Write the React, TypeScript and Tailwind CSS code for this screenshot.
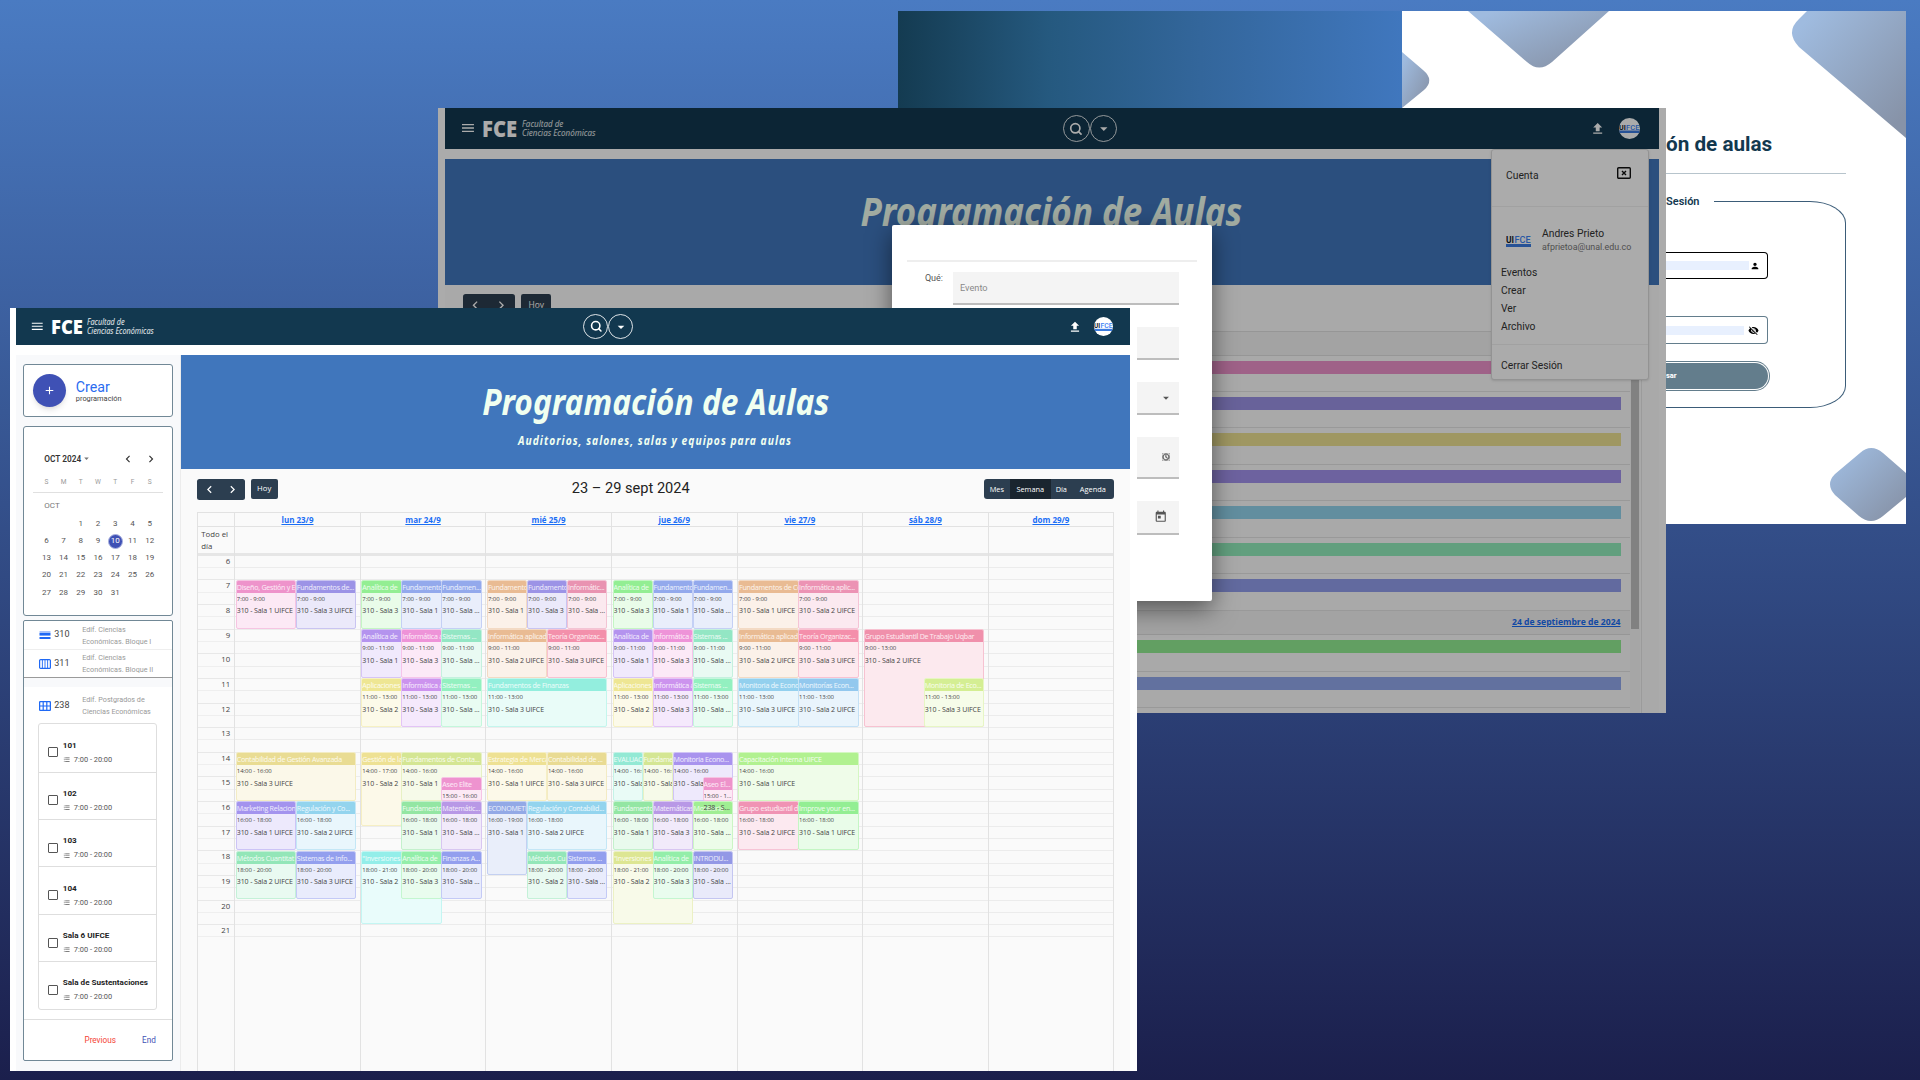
import React from "react";
import {
  MdAdd,
  MdArrowDropDown,
  MdChevronLeft,
  MdChevronRight,
  MdFileUpload,
  MdFormatListBulleted,
  MdMenu,
  MdPerson,
  MdSchedule,
  MdToday,
  MdVisibilityOff,
} from "react-icons/md";
import { Search } from "lucide-react";

const HOUR = 24.63;

/* ---------- shared header pieces (sized in em so both windows can scale them) ---------- */

function UifceMark({ className }: { className: string }) {
  return (
    <svg viewBox="0 0 50 24" className={className}>
      <text x="0" y="16" fontFamily="Roboto" fontWeight="700" fontSize="19" textLength="16" lengthAdjust="spacingAndGlyphs" fill="#111827">UI</text>
      <text x="17" y="16" fontFamily="Roboto" fontWeight="500" fontSize="19" textLength="32" lengthAdjust="spacingAndGlyphs" fill="#3b82f6">FCE</text>
      <rect x="0" y="18" width="50" height="6" fill="#3b7be0" />
    </svg>
  );
}

function NavBar() {
  return (
    <div className="flex h-[3.72em] shrink-0 items-center bg-[#12384f] text-white">
      <div className="flex flex-1 items-center pl-[1.4em]">
        <MdMenu className="mr-[0.6em] size-[1.45em]" />
        <div className="w-[3.6em]">
          <div className="origin-left scale-x-[0.92] font-['Open_Sans'] text-[2em] leading-none font-extrabold">FCE</div>
        </div>
        <div className="font-['Noto_Sans'] text-[0.82em] leading-[1.02] text-white/90 italic">
          <div className="origin-left scale-x-[0.89] whitespace-nowrap">Facultad de<br />Ciencias Económicas</div>
        </div>
      </div>
      <div className="ml-[7.3em] flex items-center">
        <div className="flex size-[2.48em] items-center justify-center rounded-full border border-white/85">
          <Search className="size-[1.25em]" strokeWidth={3} />
        </div>
        <div className="flex size-[2.48em] items-center justify-center rounded-full border border-white/85">
          <MdArrowDropDown className="size-[1.6em]" />
        </div>
      </div>
      <div className="flex flex-1 items-center justify-end pr-[1.7em]">
        <MdFileUpload className="mr-[1.2em] size-[1.4em]" />
        <div className="flex size-[1.9em] items-center justify-center overflow-hidden rounded-full bg-white">
          <UifceMark className="w-[1.9em] shrink-0" />
        </div>
      </div>
    </div>
  );
}

function Banner() {
  return (
    <div className="flex h-[11.4em] shrink-0 flex-col items-center bg-[#4076bc] pt-[2.25em] font-['Noto_Sans'] whitespace-nowrap text-[#f0fff0] italic">
      <div className="h-[5.4em] scale-x-[0.882]">
        <span className="text-[3.6em] leading-[1.4] font-bold">Programación de Aulas</span>
      </div>
      <div className="scale-x-[0.82] text-[1.25em] leading-[1.6] font-bold tracking-[0.1em]">
        Auditorios, salones, salas y equipos para aulas
      </div>
    </div>
  );
}

function NavButtons() {
  return (
    <div className="flex items-center gap-[0.6em] text-white">
      <div className="flex h-[2.1em] w-[4.75em] items-center justify-around rounded-[0.25em] bg-[#2c3e50]">
        <MdChevronLeft className="size-[1.5em]" />
        <MdChevronRight className="size-[1.5em]" />
      </div>
      <div className="flex h-[2em] w-[2.7em] items-center justify-center rounded-[0.2em] bg-[#2c3e50]">
        <span className="font-['Open_Sans'] text-[0.77em]">Hoy</span>
      </div>
    </div>
  );
}

/* ---------- login window ---------- */

function LoginWindow() {
  return (
    <div className="absolute top-[11px] left-[898px] flex h-[513px] w-[1008px] overflow-hidden bg-white">
      <div className="w-[504px] bg-[linear-gradient(90deg,#143b51_0%,#25597f_30%,#33669b_60%,#4077be_100%)]" />
      <div className="relative w-[504px] font-[Roboto]">
        <svg viewBox="0 0 504 513" className="absolute inset-0 size-full">
          <defs>
            <linearGradient id="tile" x1="0" y1="0" x2="1" y2="1">
              <stop offset="0.1" stopColor="#9fbbdf" />
              <stop offset="0.9" stopColor="#8793a8" />
            </linearGradient>
          </defs>
          <g fill="url(#tile)">
            <path d="M66 0 L125 51 Q137 62 150 51 L207 0 Z" />
            <path d="M405 0 L397 8 Q383 21 397 36 L504 127 V0 Z" />
            <path d="M0 41 L21 59 Q33 69 22 79 L0 97 Z" />
            <path d="M458 442 Q469 432 481 442 L504 462 V486 L481 505 Q469 515 457 505 L433 484 Q423 473 433 463 Z" />
          </g>
        </svg>
        <div className="relative ml-[264px] w-[180px]">
          <div className="h-[163px] border-b border-[#b7c4cc] pt-[119px] text-[20.7px] leading-[28px] font-bold whitespace-nowrap text-[#12384f]">
            <span>ón de aulas</span>
          </div>
          <div className="mt-[21px] flex h-[14px] items-center text-[11px] font-semibold text-[#12384f]">Sesión</div>
          <div className="-mt-[8px] flex">
            <div className="h-[207px] w-[48px] border-b-[1.5px] border-[#3b5c78]" />
            <div className="h-[207px] w-[132px] rounded-tr-[36px_22px] rounded-br-[36px_22px] border-[1.5px] border-l-0 border-[#3b5c78]" />
          </div>
          <div className="absolute top-[241px] left-0 w-[105px]">
            <div className="flex h-[27px] w-[102px] items-center justify-between rounded-r-[4px] border-[1.5px] border-l-0 border-black pr-[7px]">
              <div className="h-[9px] w-[83px] bg-[#e8f0fe]" />
              <MdPerson className="size-[10px]" />
            </div>
            <div className="mt-[37px] flex h-[28px] w-[102px] items-center justify-between rounded-r-[4px] border border-l-0 border-[#637d8c] pr-[8px]">
              <div className="h-[9px] w-[78px] bg-[#e8f0fe]" />
              <MdVisibilityOff className="size-[11px]" />
            </div>
            <div className="mt-[17px] h-[30px] w-[104px] rounded-r-full border border-l-0 border-[#637d8c] py-px pr-px">
              <div className="flex h-full items-center rounded-r-full bg-[#637d8c] text-[7.5px] font-extrabold text-white">sar</div>
            </div>
          </div>
        </div>
      </div>
    </div>
  );
}

/* ---------- agenda window with account menu and event dialog ---------- */

const agendaBars = ["bg-[#ee93cb]", "bg-[#9c93e6]", "bg-[#eee193]", "bg-[#a393ee]", "bg-[#93d4ee]", "bg-[#93eebd]", "bg-[#939fee]"];
const agendaBarsNext = ["bg-[#93ee93]", "bg-[#93a9ee]", "bg-[#939fee]"];

function AgendaRow({ bar }: { bar: string }) {
  return (
    <div className="h-[36.45px] border-b border-[#e4e4e4] pt-[5px] pr-[9px]">
      <div className={`h-[13px] ${bar}`} />
    </div>
  );
}

function AccountMenu() {
  return (
    <div className="absolute top-[41px] left-[1053.5px] h-[231px] w-[157.5px] rounded-[3px] border border-[#dcdcdc] bg-white font-[Roboto] text-[10.3px] whitespace-nowrap text-[#333] shadow">
      <div className="flex h-[57px] items-start justify-between border-b border-[#f0f0f0] pt-[17px] pr-[17px] pl-[14px]">
        <span className="pt-[0.5px] leading-[16px]">Cuenta</span>
        <svg viewBox="0 0 14 12" className="h-[12px] w-[14px]">
          <rect x="0.7" y="0.7" width="12.6" height="10.6" rx="1" fill="none" stroke="#111" strokeWidth="1.4" />
          <path d="M5 4 L9 8 M9 4 L5 8" stroke="#111" strokeWidth="1.4" />
        </svg>
      </div>
      <div className="flex pt-[21px] pl-[14px]">
        <UifceMark className="mt-[7px] mr-[11px] h-[12px] w-[25px]" />
        <div className="leading-[12.5px]">
          <div>Andres Prieto</div>
          <div className="text-[8.9px] text-[#777]">afprietoa@unal.edu.co</div>
        </div>
      </div>
      <div className="h-[92px] border-b border-[#f0f0f0] pt-[11px] pl-[9px] leading-[18px]">
        <div>Eventos</div>
        <div>Crear</div>
        <div>Ver</div>
        <div>Archivo</div>
      </div>
      <div className="pt-[12px] pl-[9px] leading-[18px]">Cerrar Sesión</div>
    </div>
  );
}

function EventDialog() {
  const field = "flex items-center justify-end border-b-2 border-[#bdbdbd] bg-[#f4f4f4] text-[#555]";
  return (
    <div className="absolute top-[117px] left-[454.5px] h-[376px] w-[320px] rounded-[2px] bg-white px-[15px] font-[Roboto] shadow-[0_8px_24px_rgba(0,0,0,0.5)]">
      <div className="h-[37px] border-b-2 border-[#eee]" />
      <div className="mt-[10px] flex">
        <div className="w-[46px] pr-[10px] text-right text-[9px] leading-[12px] text-[#555]">Qué:</div>
        <div className="w-[225.5px]">
          <div className="flex h-[33px] items-center border-b-2 border-[#bdbdbd] bg-[#f4f4f4] pl-[7px] text-[9.2px] text-[#8a8a8a]">
            <span className="pt-px">Evento</span>
          </div>
          <div className={`mt-[22px] h-[33px] ${field}`} />
          <div className={`mt-[22px] h-[33px] pr-[6px] ${field}`}>
            <MdArrowDropDown className="size-[14px]" />
          </div>
          <div className={`mt-[22px] h-[42px] pr-[9px] ${field}`}>
            <MdSchedule className="size-[8px]" strokeWidth={1.5} stroke="currentColor" />
          </div>
          <div className={`mt-[22px] h-[34px] pr-[11px] ${field}`}>
            <MdToday className="size-[13.5px]" />
          </div>
        </div>
      </div>
    </div>
  );
}

function AgendaWindow() {
  return (
    <div className="absolute top-[108px] left-[437.5px] h-[604.5px] w-[1228.5px] overflow-hidden bg-white text-[11px]">
      <div className="ml-[7px] w-[1214px]">
        <NavBar />
        <div className="h-[10.5px]" />
        <Banner />
        <div className="flex bg-[#fcfcfc]">
          <div className="w-[1197px] border-r border-[#e8e8e8]">
            <div className="h-[45.8px] pt-[9px] pl-[18px]">
              <NavButtons />
            </div>
            <div className="flex">
              <div className="w-[1185px]">
                <div className="h-[25px] border-y border-[#e0e0e0] bg-[#f3f3f3]" />
                {agendaBars.map((bar, i) => (
                  <AgendaRow key={i} bar={bar} />
                ))}
                <div className="flex h-[24.5px] items-center justify-end border-b border-[#e0e0e0] bg-[#f3f3f3] pr-[9px]">
                  <span className="font-['Open_Sans'] text-[8.6px] font-bold text-[#1a6ef5] underline">24 de septiembre de 2024</span>
                </div>
                {agendaBarsNext.map((bar, i) => (
                  <AgendaRow key={i} bar={bar} />
                ))}
              </div>
              <div className="w-[10px] bg-[#f8f8f8] pl-px">
                <div className="h-[298px] w-[8.5px] bg-[#c1c1c1]" />
              </div>
            </div>
          </div>
        </div>
      </div>
      <AccountMenu />
      <div className="absolute inset-0 bg-black/[0.33]" />
      <EventDialog />
    </div>
  );
}

/* ---------- weekly schedule ---------- */

type Ev = {
  tint: string;
  title: string;
  from: number;
  to: number;
  left: number;
  width: number;
  time: string;
  room: string;
  spill?: boolean;
};

const third = 33.333;

const ev = (tint: string, title: string, from: number, to: number, left: number, width: number, room: string, time?: string, spill?: boolean): Ev => ({
  tint,
  title,
  from,
  to,
  left,
  width,
  room,
  time: time ?? `${from}:00 - ${to}:00`,
  spill,
});

const S = (n: number) => `310 - Sala ${n}`;
const U = (n: number) => `310 - Sala ${n} UIFCE`;

const mornings: Ev[] = [
  ev("[--c:#93ee93]", "Analítica de", 7, 9, 0, third, S(3)),
  ev("[--c:#93a9ec]", "Fundamento", 7, 9, third, third, S(1)),
  ev("[--c:#93a9ec]", "Fundamen...", 7, 9, 2 * third, third, "310 - Sala ..."),
  ev("[--c:#b493ee]", "Analítica de", 9, 11, 0, third, S(1)),
  ev("[--c:#ee93d8]", "Informática a", 9, 11, third, third, S(3)),
  ev("[--c:#93e6c4]", "Sistemas ...", 9, 11, 2 * third, third, "310 - Sala ..."),
  ev("[--c:#eee693]", "Aplicaciones", 11, 13, 0, third, S(2)),
  ev("[--c:#cc93ee]", "Informática a", 11, 13, third, third, S(3)),
  ev("[--c:#93f0c0]", "Sistemas ...", 11, 13, 2 * third, third, "310 - Sala ..."),
];

const days: { label: string; events: Ev[] }[] = [
  {
    label: "lun 23/9",
    events: [
      ev("[--c:#ee93cb]", "Diseño, Gestión y E", 7, 9, 0, 50, U(1)),
      ev("[--c:#9c93e6]", "Fundamentos de...", 7, 9, 50, 50, U(3)),
      ev("[--c:#e9dc93]", "Contabilidad de Gestión Avanzada", 14, 16, 0, 100, U(3)),
      ev("[--c:#a393ee]", "Marketing Relacion", 16, 18, 0, 50, U(1)),
      ev("[--c:#93d4ee]", "Regulación y Co...", 16, 18, 50, 50, U(2)),
      ev("[--c:#93e6b8]", "Métodos Cuantitat", 18, 20, 0, 50, U(2)),
      ev("[--c:#939fee]", "Sistemas de Info...", 18, 20, 50, 50, U(3)),
    ],
  },
  {
    label: "mar 24/9",
    events: [
      ...mornings,
      ev("[--c:#eee193]", "Gestión de la", 14, 17, 0, third, S(2)),
      ev("[--c:#d4e693]", "Fundamentos de Conta...", 14, 16, third, 2 * third, S(1)),
      ev("[--c:#ee93cf]", "Aseo Elite", 15, 16, 2 * third, third, ""),
      ev("[--c:#93e6a3]", "Fundamento", 16, 18, third, third, S(1)),
      ev("[--c:#b898e6]", "Matemátic...", 16, 18, 2 * third, third, "310 - Sala ..."),
      ev("[--c:#93eee9]", "\"Inversiones", 18, 21, 0, 2 * third, S(2)),
      ev("[--c:#93eea9]", "Analítica de", 18, 20, third, third, S(3)),
      ev("[--c:#939fee]", "Finanzas A...", 18, 20, 2 * third, third, "310 - Sala ..."),
    ],
  },
  {
    label: "mié 25/9",
    events: [
      ev("[--c:#e9bb93]", "Fundamento", 7, 9, 0, third, S(1)),
      ev("[--c:#9c93e6]", "Fundamento", 7, 9, third, third, S(3)),
      ev("[--c:#e993b1]", "Informátic...", 7, 9, 2 * third, third, "310 - Sala ..."),
      ev("[--c:#e9bb93]", "Informática aplicad", 9, 11, 0, 50, U(2)),
      ev("[--c:#f390ab]", "Teoría Organizac...", 9, 11, 50, 50, U(3)),
      ev("[--c:#93eede]", "Fundamentos de Finanzas", 11, 13, 0, 100, U(3)),
      ev("[--c:#eee193]", "Estrategia de Merca", 14, 16, 0, 50, U(1)),
      ev("[--c:#e9db93]", "Contabilidad de ...", 14, 16, 50, 50, U(3)),
      ev("[--c:#93a9e6]", "ECONOMETR", 16, 19, 0, third, S(1)),
      ev("[--c:#93d4ee]", "Regulación y Contabilid...", 16, 18, third, 2 * third, U(2)),
      ev("[--c:#93e6b8]", "Métodos Cu", 18, 20, third, third, S(2)),
      ev("[--c:#939fee]", "Sistemas ...", 18, 20, 2 * third, third, "310 - Sala ..."),
    ],
  },
  {
    label: "jue 26/9",
    events: [
      ...mornings,
      ev("[--c:#93e9d4]", "EVALUAC", 14, 16, 0, 25, "310 - Sala"),
      ev("[--c:#d4e693]", "Fundame", 14, 16, 25, 25, "310 - Sala"),
      ev("[--c:#a993ee]", "Monitoria Econo...", 14, 16, 50, 50, "310 - Sala"),
      ev("[--c:#93e6a3]", "Fundamento", 16, 18, 0, third, S(1)),
      ev("[--c:#b898e6]", "Matemáticas", 16, 18, third, third, S(3)),
      ev("[--c:#a0ee93]", "Monitoria", 16, 18, 2 * third, third, "310 - Sala ..."),
      ev("[--c:#ee93cb]", "Aseo El...", 15, 16, 75, 25, "238 - S...", "15:00 - 1...", true),
      ev("[--c:#dde693]", "\"Inversiones", 18, 21, 0, 2 * third, S(2)),
      ev("[--c:#93eea9]", "Analítica de", 18, 20, third, third, S(3)),
      ev("[--c:#9398e6]", "INTRODU...", 18, 20, 2 * third, third, "310 - Sala ..."),
    ],
  },
  {
    label: "vie 27/9",
    events: [
      ev("[--c:#e9bb93]", "Fundamentos de Co", 7, 9, 0, 50, U(1)),
      ev("[--c:#ec93b4]", "Informática aplic...", 7, 9, 50, 50, U(2)),
      ev("[--c:#e9bb93]", "Informática aplicad", 9, 11, 0, 50, U(2)),
      ev("[--c:#f48fab]", "Teoría Organizac...", 9, 11, 50, 50, U(3)),
      ev("[--c:#93d0ee]", "Monitoria de Econo", 11, 13, 0, 50, U(3)),
      ev("[--c:#93c8ee]", "Monitorías Econ...", 11, 13, 50, 50, U(2)),
      ev("[--c:#b1f190]", "Capacitación Interna UIFCE", 14, 16, 0, 100, U(1)),
      ev("[--c:#f093b4]", "Grupo estudiantil d", 16, 18, 0, 50, U(2)),
      ev("[--c:#93ee93]", "Improve your en...", 16, 18, 50, 50, U(1)),
    ],
  },
  {
    label: "sáb 28/9",
    events: [
      ev("[--c:#f090ab]", "Grupo Estudiantil De Trabajo Uqbar", 9, 13, 0, 100, U(2)),
      ev("[--c:#d4ee93]", "Monitoria de Eco...", 11, 13, 50, 50, U(3)),
    ],
  },
  { label: "dom 29/9", events: [] },
];

function EventCard({ e }: { e: Ev }) {
  return (
    <div
      className={`absolute rounded-[2px] border border-[color-mix(in_srgb,var(--c)_55%,white)] bg-[color-mix(in_srgb,var(--c)_20%,white)] ${e.spill ? "" : "overflow-hidden"} ${e.tint}`}
      style={{ left: `${e.left}%`, width: `calc(${e.width}% + 0.5px)`, top: (e.from - 6) * HOUR, height: (e.to - e.from) * HOUR - 0.5 }}
    >
      <div className="h-[12px] overflow-hidden bg-(--c) text-[7.1px] leading-[13px] tracking-[-0.035em] text-white/85">{e.title}</div>
      <div className="h-[11.5px] overflow-hidden text-[6px] leading-[12px] tracking-[-0.01em] text-[#444]">{e.time}</div>
      <div className="text-[7px] leading-[13px] tracking-[-0.015em] text-[#444]">{e.room}</div>
    </div>
  );
}

function WeekGrid() {
  return (
    <div className="flex w-[917px] border-t border-r border-[#e2e2e2] font-['Open_Sans'] whitespace-nowrap">
      <div className="w-[37px] border-l border-[#e2e2e2] text-[7.8px] text-[#444]">
        <div className="h-[14px] border-b border-[#e2e2e2]" />
        <div className="h-[25.5px] pt-[1.5px] pl-[3px] leading-[11.8px]">Todo el<br />día</div>
        <div className="h-[3px] bg-[#e6e6e6]" />
        {Array.from({ length: 16 }, (_, i) => (
          <div key={i} className={i === 15 ? "h-[12.3px] border-b border-[#e8e8e8]" : "h-[24.63px] border-b border-[#e8e8e8]"}>
            <div className="h-[12.3px] border-b border-[#efefef] pr-[4px] text-right leading-[11px]">{i + 6}</div>
          </div>
        ))}
      </div>
      {days.map((d) => (
        <div key={d.label} className="w-[125.6px] border-l border-[#e2e2e2]">
          <div className="flex h-[14px] items-center justify-center border-b border-[#e2e2e2]">
            <span className="text-[8px] font-bold text-[#1a6ef5] underline">{d.label}</span>
          </div>
          <div className="h-[25.5px]" />
          <div className="h-[3px] bg-[#e6e6e6]" />
          <div className="relative">
            {Array.from({ length: 31 }, (_, i) => (
              <div key={i} className="h-[12.315px] border-b border-[#ececec]" />
            ))}
            <div className="absolute top-[-0.6px] bottom-0 left-[0.6px] w-[120px]">
              {d.events.map((e, i) => (
                <EventCard key={i} e={e} />
              ))}
            </div>
          </div>
        </div>
      ))}
    </div>
  );
}

function MonthCard() {
  const cells: (number | null)[] = [null, null, ...Array.from({ length: 31 }, (_, i) => i + 1)];
  return (
    <div className="h-[190px] rounded-[3px] border-[1.3px] border-[#718896] bg-white px-[9px] pt-[23px] text-[8px] text-[#555]">
      <div className="flex h-[17px] items-center pl-[11px] text-[#333]">
        <span className="text-[8.3px] font-semibold">OCT 2024</span>
        <MdArrowDropDown className="size-[11px] text-[#777]" />
        <MdChevronLeft className="ml-[28.5px] size-[14px]" />
        <MdChevronRight className="ml-[9.5px] size-[14px]" />
      </div>
      <div className="mt-[6px] grid h-[20px] grid-cols-7 items-center border-b border-[#e0e0e0] px-[4.5px] text-center text-[6.6px] text-[#999]">
        {["S", "M", "T", "W", "T", "F", "S"].map((c, i) => (
          <span key={i}>{c}</span>
        ))}
      </div>
      <div className="flex h-[22px] items-center pt-[4px] pl-[11px] text-[8px] text-[#777]">OCT</div>
      <div className="grid grid-cols-7 px-[4.5px] text-center">
        {cells.map((c, i) => (
          <div key={i} className="flex h-[17.2px] items-center justify-center">
            {c === 10 ? (
              <span className="flex size-[15px] items-center justify-center rounded-full border border-[#aab2e0] bg-[#3f51b5] text-white">10</span>
            ) : (
              c
            )}
          </div>
        ))}
      </div>
    </div>
  );
}

const rowsIcon = (
  <svg viewBox="0 0 12 10" className="h-[10px] w-[12px]">
    <rect x="0.5" y="1" width="11" height="1" fill="#a9c4fb" />
    <rect x="0.5" y="2.6" width="11" height="3" fill="#1f69f5" />
    <rect x="0.5" y="7" width="11" height="2" fill="#1f69f5" />
  </svg>
);

const columnsIcon = (
  <svg viewBox="0 0 12 10" className="h-[10px] w-[12px]" fill="none" stroke="#1f69f5">
    <rect x="0.6" y="0.6" width="10.8" height="8.8" rx="1" strokeWidth="1.2" />
    <path d="M3.4 1 V9 M6 1 V9 M8.6 1 V9" strokeWidth="0.9" />
  </svg>
);

const gridIcon = (
  <svg viewBox="0 0 12 10" className="h-[10px] w-[12px]" fill="none" stroke="#1f69f5">
    <rect x="0.6" y="0.6" width="10.8" height="8.8" rx="1" strokeWidth="1.3" />
    <path d="M4.2 1 V9 M7.8 1 V9 M1 5 H11" strokeWidth="1.2" />
  </svg>
);

function Building({ icon, code, children }: { icon: React.ReactNode; code: string; children: React.ReactNode }) {
  return (
    <div className="flex h-[27.5px] items-center pl-[15px]">
      {icon}
      <span className="ml-[3px] w-[28px] text-[9px] text-[#444]">{code}</span>
      <span className="pt-px text-[7.2px] leading-[11.8px] text-[#999]">{children}</span>
    </div>
  );
}

function RoomsCard() {
  return (
    <div className="flex h-[440.5px] flex-col rounded-[2px] border-[1.3px] border-[#718896] bg-white">
      <Building icon={rowsIcon} code="310">Edif. Ciencias<br />Económicas. Bloque I</Building>
      <div className="border-t border-[#eee]">
        <Building icon={columnsIcon} code="311">Edif. Ciencias<br />Económicas. Bloque II</Building>
      </div>
      <div className="h-[10px] border-t border-[#9a9a9a] bg-[#f8f9fb]" />
      <div className="pt-[4.5px]">
        <Building icon={gridIcon} code="238">Edif. Postgrados de<br />Ciencias Económicas</Building>
      </div>
      <div className="mt-[4px] mr-[14.5px] ml-[13.5px] rounded-[3px] border border-[#dedede]">
        {["101", "102", "103", "104", "Sala 6 UIFCE", "Sala de Sustentaciones"].map((name, i) => (
          <div key={name} className={i === 0 ? "flex h-[47.4px] items-center pt-[9px] pl-[9px]" : "flex h-[47.4px] items-center border-t border-[#dedede] pt-[9px] pl-[9px]"}>
            <div className="size-[10px] rounded-[1px] border-[1.3px] border-[#555]" />
            <div className="ml-[5px]">
              <div className="text-[8.1px] leading-[15px] font-bold text-[#222]">{name}</div>
              <div className="flex items-center text-[7.4px] leading-[14px] text-[#555]">
                <MdFormatListBulleted className="mr-[3.5px] size-[7.5px]" />
                7:00 - 20:00
              </div>
            </div>
          </div>
        ))}
      </div>
      <div className="mt-[9px] flex flex-1 items-center justify-end gap-[26px] border-t border-[#dedede] pr-[16px] text-[8.2px]">
        <span className="text-[#f44336]">Previous</span>
        <span className="text-[#3f51b5]">End</span>
      </div>
    </div>
  );
}

function ScheduleWindow() {
  return (
    <div className="absolute top-[308px] left-[9.5px] flex h-[763px] w-[1127.5px] flex-col overflow-hidden bg-white px-[6.8px] text-[10px]">
      <NavBar />
      <div className="h-[9.6px] shrink-0" />
      <div className="flex min-h-0 flex-1">
        <div className="flex w-[164.5px] flex-col gap-[9px] border-r border-[#ececec] bg-[#f8f9fb] px-[7px] pt-[9.5px] font-[Roboto] whitespace-nowrap">
          <div className="flex h-[53px] shrink-0 items-center rounded-[3px] border-[1.3px] border-[#718896] bg-white pl-[9px]">
            <div className="flex size-[33px] items-center justify-center rounded-full bg-[#3f51b5] text-white shadow-md">
              <MdAdd className="size-[13px]" />
            </div>
            <div className="ml-[9.5px] pt-px leading-none">
              <div className="text-[14.2px] text-[#2a6cf0]">Crear</div>
              <div className="mt-px text-[7.4px] text-[#444]">programación</div>
            </div>
          </div>
          <MonthCard />
          <div className="-mt-[5px]">
            <RoomsCard />
          </div>
        </div>
        <div className="flex flex-1 flex-col bg-[#fafafa]">
          <Banner />
          <div className="flex h-[43.5px] items-center justify-between px-[16.4px] pb-[3px]">
            <NavButtons />
            <div className="font-[Roboto] text-[14.6px] text-[#222]">23 – 29 sept 2024</div>
            <div className="flex h-[20.5px] overflow-hidden rounded-[3px] bg-[#2c3e50] text-center font-['Open_Sans'] text-[7.4px] leading-[20px] text-white">
              <span className="w-[26px]">Mes</span>
              <span className="w-[41px] bg-[#1a252f]">Semana</span>
              <span className="w-[21px]">Día</span>
              <span className="w-[42px]">Agenda</span>
            </div>
          </div>
          <div className="flex flex-1 pl-[16.4px]">
            <WeekGrid />
          </div>
        </div>
      </div>
    </div>
  );
}

export default function App() {
  return (
    <div className="relative h-[1080px] w-[1920px] overflow-hidden bg-[linear-gradient(180deg,#4a7bc2_0%,#1b1f4c_100%)]">
      <LoginWindow />
      <AgendaWindow />
      <ScheduleWindow />
    </div>
  );
}
